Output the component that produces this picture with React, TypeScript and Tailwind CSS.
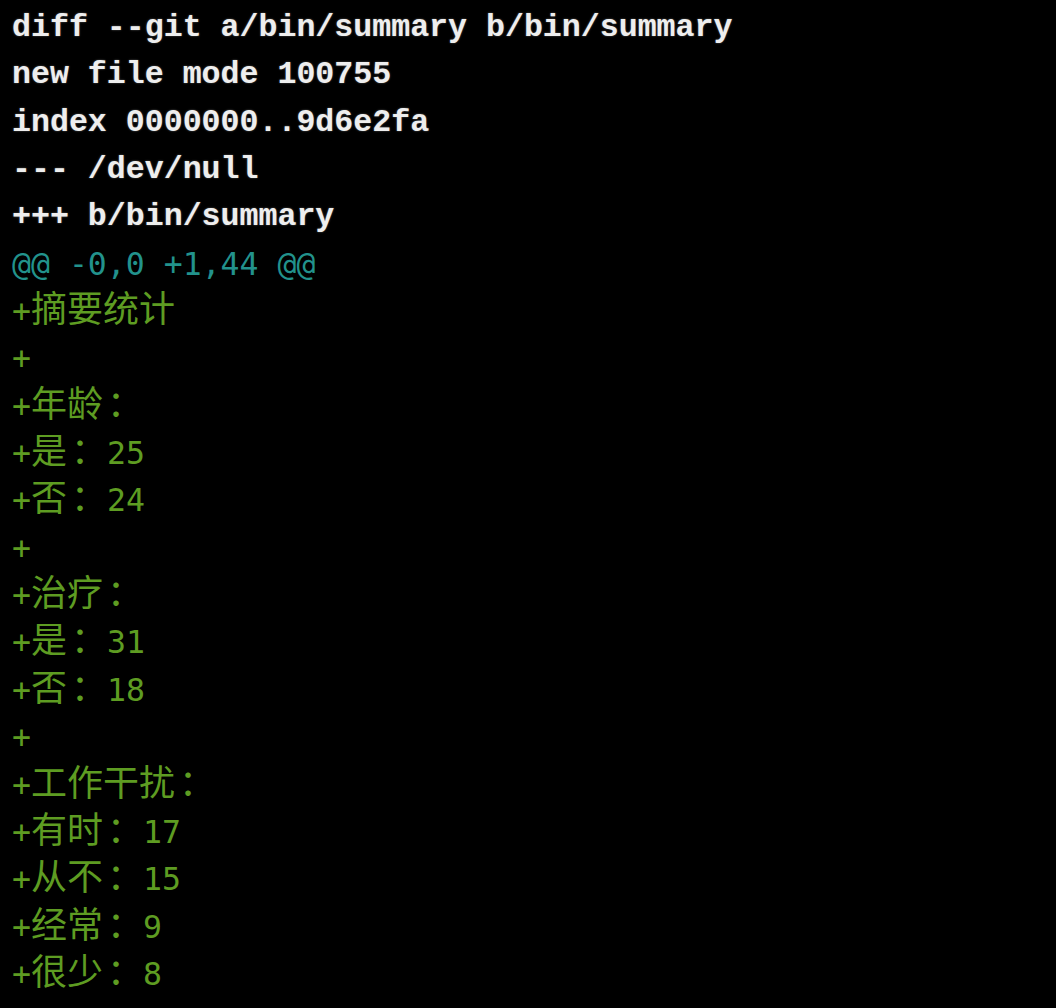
import React from "react";

const header = [
  "diff --git a/bin/summary b/bin/summary",
  "new file mode 100755",
  "index 0000000..9d6e2fa",
  "--- /dev/null",
  "+++ b/bin/summary",
];

type Line = { cjk?: string; colon?: boolean; num?: string };

const added: Line[] = [
  { cjk: "摘要统计" },
  {},
  { cjk: "年龄", colon: true },
  { cjk: "是", colon: true, num: "25" },
  { cjk: "否", colon: true, num: "24" },
  {},
  { cjk: "治疗", colon: true },
  { cjk: "是", colon: true, num: "31" },
  { cjk: "否", colon: true, num: "18" },
  {},
  { cjk: "工作干扰", colon: true },
  { cjk: "有时", colon: true, num: "17" },
  { cjk: "从不", colon: true, num: "15" },
  { cjk: "经常", colon: true, num: "9" },
  { cjk: "很少", colon: true, num: "8" },
];

function AddedLine({ line }: { line: Line }) {
  return (
    <div className="flex items-baseline h-[47.35px] leading-[47.35px] text-[#5e9c22] whitespace-pre font-['DejaVu_Sans_Mono','Noto_Sans_CJK_SC',monospace] text-[31.5px]">
      <span>+</span>
      {line.cjk && (
        <span className="text-[36px] leading-[37.6px] font-['Noto_Sans_CJK_SC',sans-serif]">{line.cjk}</span>
      )}
      {line.colon && (
        <span className="inline-block w-[40px] pl-[4px] text-[36px] leading-[37.6px] font-['Noto_Sans_CJK_SC',sans-serif]">：</span>
      )}
      {line.num && <span>{line.num}</span>}
    </div>
  );
}

export default function App() {
  return (
    <div className="w-[1056px] h-[1008px] bg-black overflow-hidden pt-[4px] pl-[12px]">
      <div className="flex flex-col">
        {header.map((l, i) => (
          <div
            key={i}
            className="h-[47.35px] leading-[47.35px] text-[31.6px] font-bold text-[#eeeeee] whitespace-pre font-['Liberation_Mono',monospace] [text-shadow:0_0_2px_rgba(120,120,120,0.8)]"
          >
            {l}
          </div>
        ))}
        <div className="h-[47.35px] leading-[47.35px] text-[31.5px] text-[#22928c] whitespace-pre font-['DejaVu_Sans_Mono',monospace]">
          @@ -0,0 +1,44 @@
        </div>
        {added.map((l, i) => (
          <AddedLine key={i} line={l} />
        ))}
      </div>
    </div>
  );
}
